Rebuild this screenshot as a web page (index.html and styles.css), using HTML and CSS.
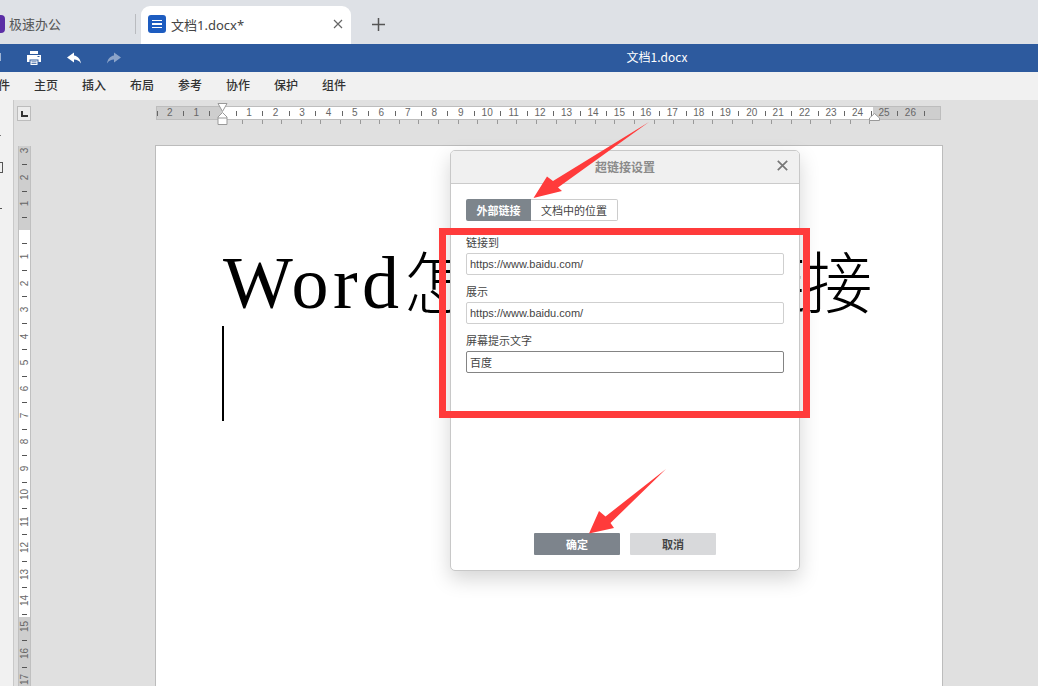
FILE: index.html
```html
<!DOCTYPE html>
<html lang="zh">
<head>
<meta charset="utf-8">
<title>文档1.docx</title>
<link rel="stylesheet" href="styles.css">
</head>
<body>
<div class="app">
  <header class="tabbar">
    <div class="tab">
      <span class="tab-logo"></span>
      <span>极速办公</span>
    </div>
    <span class="tab-sep"></span>
    <div class="tab-active">
      <span class="doc-icon"><i></i><i></i><i></i></span>
      <span class="tab-title">文档1.docx*</span>
      <svg class="tab-close" width="10" height="10" viewBox="0 0 10 10"><path d="M1 1l8 8M9 1l-8 8" stroke="#666" stroke-width="1.2" fill="none"/></svg>
    </div>
    <svg class="tab-plus" width="13" height="13" viewBox="0 0 13 13"><path d="M6.500 0v13M0 6.500h13" stroke="#555" stroke-width="1.500" fill="none"/></svg>
  </header>

  <div class="toolbar">
    <div class="tools">
      <span class="tool-cut"></span>
      <svg class="tool" width="16" height="16" viewBox="0 0 16 16"><path fill="#fff" d="M4 1h8v3H4zM1 5h14v7h-2.500V9.500h-9V12H1zM4.500 10.500h7V15h-7z"/><path fill="#2d5a9e" d="M5.500 11.500h5v.8h-5zM5.500 13h5v.8h-5zM11.500 6h2v1h-2z"/></svg>
      <svg class="tool" width="16" height="16" viewBox="0 0 16 16"><path fill="#fff" d="M8 2.500L1 7.500 8 12.500V9.500C11 9.500 13 10.500 15 13.500 14.500 9.500 12 6 8 5.500z"/></svg>
      <svg class="tool tool-dim" width="16" height="16" viewBox="0 0 16 16"><path fill="#fff" d="M8 2.500L15 7.500 8 12.500V9.500C5 9.500 3 10.500 1 13.500 1.500 9.500 4 6 8 5.500z"/></svg>
    </div>
    <div class="doc-title">文档1.docx</div>
  </div>

  <nav class="menu">
    <span>文件</span><span>主页</span><span>插入</span><span>布局</span><span>参考</span><span>协作</span><span>保护</span><span>组件</span>
  </nav>

  <div class="workspace">
    <aside class="side">
      <span class="side-dot"></span>
      <span class="side-box"></span>
      <span class="side-dash"></span>
    </aside>
    <div class="sheet-grid">
      <div class="corner"><span class="corner-l"></span></div>
      <div class="hruler-wrap">
        <div class="hruler">
          <span>2</span><span>1</span><span></span><span>1</span><span>2</span><span>3</span><span>4</span><span>5</span><span>6</span><span>7</span><span>8</span><span>9</span><span>10</span><span>11</span><span>12</span><span>13</span><span>14</span><span>15</span><span>16</span><span>17</span><span>18</span><span>19</span><span>20</span><span>21</span><span>22</span><span>23</span><span>24</span><span>25</span><span>26</span><span></span>
        </div>
        <div class="tabticks"></div>
        <svg class="marker-left" width="12" height="22" viewBox="0 0 12 22"><path d="M1 .5h9L5.500 8.500z" fill="#fff" stroke="#999"/><path d="M5.500 9.500L10 14v7.500H1V14z" fill="#fff" stroke="#999"/><path d="M1 15h9" stroke="#999"/></svg>
        <svg class="marker-right" width="11" height="8" viewBox="0 0 11 8"><path d="M5.500 .5L10.500 5v2.500H.5V5z" fill="#fff" stroke="#999"/></svg>
      </div>
      <div class="vruler">
        <span><b>3</b></span><span><b>2</b></span><span><b>1</b></span><span></span><span><b>1</b></span><span><b>2</b></span><span><b>3</b></span><span><b>4</b></span><span><b>5</b></span><span><b>6</b></span><span><b>7</b></span><span><b>8</b></span><span><b>9</b></span><span><b>10</b></span><span><b>11</b></span><span><b>12</b></span><span><b>13</b></span><span><b>14</b></span><span><b>15</b></span><span><b>16</b></span><span><b>17</b></span>
      </div>
      <main class="page">
        <h1 class="doc-heading"><span class="latin">Word</span><span class="cjk">怎么设置超链接</span></h1>
        <div class="caret"></div>
      </main>
    </div>
  </div>

  <section class="dialog">
    <div class="dialog-head">
      <span>超链接设置</span>
      <svg class="dialog-close" width="11" height="11" viewBox="0 0 11 11"><path d="M.8.8l9.400 9.400M10.200.8L.8 10.200" stroke="#777" stroke-width="1.700" fill="none"/></svg>
    </div>
    <div class="dialog-body">
      <div class="seg">
        <span class="seg-on">外部链接</span><span class="seg-off">文档中的位置</span>
      </div>
      <label class="field-label">链接到</label>
      <input class="field" value="https://www.baidu.com/">
      <label class="field-label">展示</label>
      <input class="field" value="https://www.baidu.com/">
      <label class="field-label">屏幕提示文字</label>
      <input class="field field-focus" value="百度">
    </div>
    <div class="dialog-foot">
      <span class="btn btn-ok">确定</span>
      <span class="btn btn-cancel">取消</span>
    </div>
  </section>

  <div class="red-frame"></div>
  <svg class="arrows" width="1038" height="686" viewBox="0 0 1038 686">
    <path fill="#ff3b3b" d="M649 122L553 181 547 176.500 533.500 198 562 191 558 187.500z"/>
    <path fill="#ff3b3b" d="M666 469L605.500 516.500 599 511 589 533.500 614 528 610.500 523z"/>
  </svg>
</div>
</body>
</html>
```
FILE: styles.css
```css
* { box-sizing: border-box; }
html, body { margin: 0; padding: 0; }
body {
  width: 1038px;
  height: 686px;
  overflow: hidden;
  background: #e0e0e0;
  font-family: "Liberation Sans", "Noto Sans CJK SC", sans-serif;
}
.app { position: relative; width: 1038px; height: 686px; overflow: hidden; display: flex; flex-direction: column; }

/* tab bar */
.tabbar { height: 44px; flex: none; background: #dee1e6; display: flex; align-items: flex-end; }
.tab {
  width: 135px; height: 38px; margin-left: -13px; padding-bottom: 3px; flex: none;
  display: flex; align-items: center; gap: 4px;
  font: 13px "Noto Sans CJK SC", sans-serif; color: #555;
}
.tab-logo { width: 18px; height: 18px; border-radius: 4px; background: #5b2ea6; flex: none; }
.tab-sep { width: 1px; height: 20px; background: #b9bbbf; margin: 0 0 10px 13px; flex: none; }
.tab-active {
  width: 210px; height: 38px; margin-left: 5px; padding: 0 8px 2px 7px; flex: none;
  background: #fff; border-radius: 9px 9px 0 0;
  display: flex; align-items: center;
  font: 13px "Noto Sans", "Noto Sans CJK SC", sans-serif; color: #444;
}
.doc-icon {
  width: 18px; height: 18px; background: #1d5cc0; border-radius: 3px; flex: none;
  display: flex; flex-direction: column; justify-content: center; gap: 2px; padding: 0 4px;
}
.doc-icon i { display: block; height: 1.500px; background: #fff; }
.tab-title { margin-left: 5px; flex: 1; }
.tab-close { flex: none; }
.tab-plus { margin: 0 0 13px 21px; flex: none; }

/* blue toolbar */
.toolbar { height: 28px; flex: none; background: #2d5a9e; display: flex; align-items: center; }
.tools { width: 276px; flex: none; display: flex; align-items: center; padding-left: 26px; gap: 24px; position: relative; }
.tool-cut { position: absolute; left: 0; top: 3px; width: 1px; height: 8px; background: #9fb4d4; }
.tool { flex: none; }
.tool-dim { opacity: .45; }
.doc-title { flex: 1; text-align: center; padding-bottom: 3px; font: 12px "Noto Sans CJK SC", sans-serif; color: #fff; }

/* menu */
.menu {
  height: 28px; width: 1052px; flex: none; background: #f1f1f1;
  display: flex; align-items: center; gap: 24px; margin-left: -14px; padding-bottom: 3px;
  font: 500 12px "Noto Sans CJK SC", sans-serif; color: #333;
}

/* workspace */
.workspace { flex: 1; min-height: 0; display: flex; background: #e0e0e0; }
.side { width: 14px; flex: none; background: #f1f1f1; border-right: 1px solid #c9c9c9; display: flex; flex-direction: column; align-items: flex-start; }
.side-dot { width: 1px; height: 1px; background: #777; margin-top: 35px; }
.side-box { width: 3px; height: 11px; border: 1px solid #555; border-left: 0; margin-top: 26px; }
.side-dash { width: 2px; height: 1px; background: #555; margin-top: 35px; }
.sheet-grid { flex: 1; min-width: 0; display: grid; grid-template-columns: 141px 788px; grid-template-rows: 45px 541px; }

.corner {
  width: 14px; height: 15px; margin: 6px 0 0 3px;
  border: 1px solid #bcbcbc; background: #ececec;
  display: flex; align-items: center; justify-content: center;
}
.corner-l { width: 7px; height: 6px; border-left: 2px solid #333; border-bottom: 2px solid #333; }

.hruler-wrap { position: relative; padding: 6px 0 0 1px; }
.hruler {
  width: 785px; height: 14px; border: 1px solid #bdbdbd; overflow: hidden; display: flex;
  background: linear-gradient(to right, #cecece 65px, #fff 65px, #fff 716px, #cecece 716px);
  font-size: 10px; line-height: 12px; color: #666;
}
.hruler span {
  flex: none; width: 26.460px; text-align: center; position: relative; left: -.5px;
  background: linear-gradient(#666, #666) left center / 1px 5px no-repeat;
}
.tabticks {
  width: 640px; height: 4px; margin-left: 86px;
  background: repeating-linear-gradient(to right, #999 0, #999 1px, transparent 1px, transparent 19.600px);
}
.marker-left { position: absolute; left: 62px; top: 3px; }
.marker-right { position: absolute; left: 714px; top: 13px; }

.vruler {
  width: 13px; height: 541px; margin: 1px 0 0 4px; border: 1px solid #c0c0c0; border-width: 0 1px; overflow: hidden;
  background: linear-gradient(to bottom, #cecece 84px, #fff 84px, #fff 471px, #cecece 471px);
  font-size: 10px; color: #666;
}
.vruler span {
  display: flex; align-items: center; justify-content: center; height: 26.460px;
  background: linear-gradient(#555, #555) center top / 5px 1px no-repeat;
}
.vruler span:first-child { margin-top: -8.400px; }
.vruler b { display: block; font-weight: 400; transform: rotate(-90deg); line-height: 11px; white-space: nowrap; }

.page { background: #fff; border: 1px solid #bcbcbc; border-bottom: 0; padding: 85px 0 0 66px; overflow: hidden; }
.doc-heading {
  margin: 0; height: 95px; line-height: 95px; font-weight: 400; color: #000; white-space: nowrap; display: flex; align-items: baseline;
}
.latin { font: 74px/95px "Liberation Serif", serif; letter-spacing: 4.500px; margin-left: 1px; }
.cjk { font: 300 67px/95px "Noto Sans CJK SC", sans-serif; }
.caret { width: 2px; height: 95px; background: #000; }

/* dialog */
.dialog {
  position: absolute; left: 450px; top: 150px; width: 350px; height: 421px;
  background: #fff; border: 1px solid #c8c8c8; border-radius: 5px;
  box-shadow: 0 8px 20px rgba(0, 0, 0, .17);
  display: flex; flex-direction: column; overflow: hidden;
}
.dialog-head {
  height: 33px; flex: none; background: #f0f0f0; border-bottom: 1px solid #cbcbcb; padding-bottom: 2px;
  display: flex; align-items: center; justify-content: center; position: relative;
  font: 700 12px "Noto Sans CJK SC", sans-serif; color: #8a8a8a;
}
.dialog-close { position: absolute; right: 11px; top: 9px; }
.dialog-body { padding: 15px 15px 0; flex: 1; display: flex; flex-direction: column; align-items: flex-start; }
.seg { display: flex; height: 22px; margin-bottom: 14px; font: 11px/20px "Noto Sans CJK SC", sans-serif; }
.seg-on { width: 65px; background: #7d858c; color: #fff; font-weight: 700; text-align: center; border-radius: 2px 0 0 2px; line-height: 22px; }
.seg-off { width: 87px; border: 1px solid #ccc; border-left: 0; color: #444; text-align: center; border-radius: 0 2px 2px 0; }
.field-label { display: block; font: 11px/14px "Noto Sans CJK SC", sans-serif; color: #444; margin-bottom: 4px; }
.field {
  display: block; width: 318px; height: 22px; margin: 0 0 9px; padding: 0 3px;
  border: 1px solid #cfcfcf; border-radius: 2px; outline: 0; background: #fff;
  font: 11px "Liberation Sans", "Noto Sans CJK SC", sans-serif; color: #444;
}
.field-focus { border-color: #848484; }
.dialog-foot { flex: none; display: flex; justify-content: center; gap: 10px; padding-bottom: 15px; }
.btn { width: 86px; height: 22px; border-radius: 1px; text-align: center; font: 700 11px/22px "Noto Sans CJK SC", sans-serif; }
.btn-ok { background: #7d848c; color: #fff; }
.btn-cancel { background: #d8d9db; color: #444; }

/* annotations */
.red-frame { position: absolute; left: 439px; top: 228px; width: 371px; height: 190px; border: 7px solid #ff3b3b; }
.arrows { position: absolute; left: 0; top: 0; pointer-events: none; }
```
